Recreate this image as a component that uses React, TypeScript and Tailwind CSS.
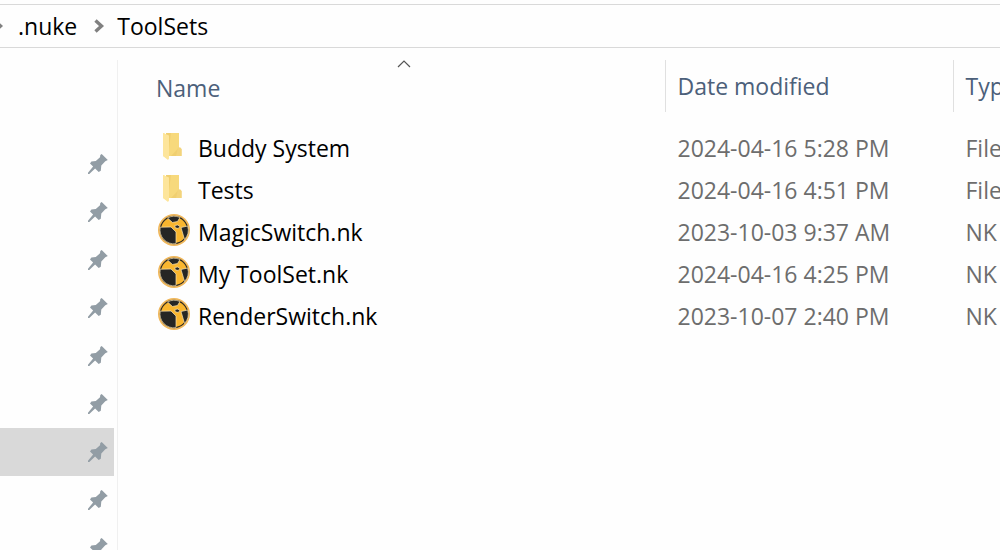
type Entry = {
  name: string;
  kind: "folder" | "nuke";
  modified: string;
  type: string;
};

const entries: Entry[] = [
  { name: "Buddy System", kind: "folder", modified: "2024-04-16 5:28 PM", type: "File folder" },
  { name: "Tests", kind: "folder", modified: "2024-04-16 4:51 PM", type: "File folder" },
  { name: "MagicSwitch.nk", kind: "nuke", modified: "2023-10-03 9:37 AM", type: "NK File" },
  { name: "My ToolSet.nk", kind: "nuke", modified: "2024-04-16 4:25 PM", type: "NK File" },
  { name: "RenderSwitch.nk", kind: "nuke", modified: "2023-10-07 2:40 PM", type: "NK File" },
];

const pinnedCount = 9;
const selectedPin = 6;

const ChevronIcon = () => (
  <svg width="12" height="16" viewBox="0 0 12 16" fill="none" className="shrink-0">
    <path d="M2.5 2.5 8.5 8l-6 5.5" stroke="#808080" strokeWidth="3.4" />
  </svg>
);

const PinIcon = () => (
  <svg width="20" height="20" viewBox="0 0 20 20" fill="#929da5">
    <path d="M13.7 0 19.8 6.1 17.3 7.3 13.3 11.6 12.8 16.7 10.7 18 7.1 14.4 1.3 20H0v-1.3l5.1-6.2L2 9.4l1.4-1.8 4.4-.5L12 3.3l.3-2.2z" />
  </svg>
);

const FolderIcon = () => (
  <svg width="32" height="32" viewBox="0 0 32 32">
    <path d="M8 3h13v14.500l2.500 1.500v7H8z" fill="#f0cf70" />
    <path d="M13 3h8v14.500L13 26H10z" fill="#f7d97c" />
    <path d="M20 17.500h2.500l1 1.500v7H18z" fill="#f3d47c" />
    <path d="M5 3h1l5 4v22.500L5 26z" fill="#ffe9a4" />
    <path d="m5 3 6 2.500V26l-1 4-5-4z" fill="#fde59b" />
  </svg>
);

const NukeIcon = () => (
  <svg width="32" height="32" viewBox="0 0 32 32">
    <circle cx="16" cy="16" r="16" fill="#f0b75a" />
    <circle cx="16" cy="16" r="14.200" fill="#2b2923" />
    <circle cx="16" cy="16" r="13" fill="#f9b62f" />
    <g fill="#262624" stroke="#f7e3b4" strokeWidth="0.700">
      <path d="M9.500 4A14 14 0 0 1 22 3.500l-2.500 4-5 1z" />
      <path d="M2.200 13.200 13 13l5 5v11.700A14 14 0 0 1 2.200 13.200z" />
      <path d="M23 13.500 29.700 12A14 14 0 0 1 26.500 25.500z" />
      <path d="m16.800 11.500 3-.5 2 1.500-1.500 2-3-.7z" />
    </g>
  </svg>
);

const SortIcon = () => (
  <svg width="14" height="8" viewBox="0 0 14 8" fill="none">
    <path d="m1 7 6-6 6 6" stroke="#555" strokeWidth="1.200" />
  </svg>
);

const AddressBar = () => (
  <nav
    aria-label="Path"
    className="mt-1 flex h-11 shrink-0 items-center border-y border-[#d9d9d9] text-black"
  >
    <div className="-ml-2">
      <ChevronIcon />
    </div>
    <a href="#nuke" className="ml-3 pl-[2px]">
      .nuke
    </a>
    <div className="mr-3 ml-4">
      <ChevronIcon />
    </div>
    <a href="#toolsets">ToolSets</a>
  </nav>
);

const Sidebar = () => (
  <aside className="mt-3 w-[118px] shrink-0 overflow-hidden border-r border-[#f0f0f0] pt-20 pr-[3px]">
    <ul>
      {Array.from({ length: pinnedCount }, (_, i) => (
        <li
          key={i}
          className={
            i === selectedPin
              ? "flex h-12 items-center justify-end bg-[#d9d9d9] pr-[6px]"
              : "flex h-12 items-center justify-end pr-[6px]"
          }
        >
          <PinIcon />
        </li>
      ))}
    </ul>
  </aside>
);

const FileTable = () => (
  <table className="mt-3 w-full min-w-[1000px] table-fixed self-start text-left">
    <thead>
      <tr className="h-[52px] text-[#4c607a]">
        <th className="w-[521px] p-0 font-normal">
          <div className="flex h-[52px] flex-col">
            <div className="flex h-3 items-center justify-center pb-1">
              <SortIcon />
            </div>
            <span className="px-3 leading-8">Name</span>
          </div>
        </th>
        <th className="w-[288px] border-l border-[#e0e0e0] px-3 py-0 font-normal">
          Date modified
        </th>
        <th className="border-l border-[#e0e0e0] px-3 py-0 font-normal">Type</th>
      </tr>
    </thead>
    <tbody className="before:block before:h-[15px]">
      {entries.map((entry) => (
        <tr key={entry.name} className="h-[42px] text-[#6d6d6d]">
          <td className="py-0 pr-0 pl-[14px]">
            <div className="flex items-center gap-2 text-black">
              <div className="pb-1">
                {entry.kind === "folder" ? <FolderIcon /> : <NukeIcon />}
              </div>
              <span>{entry.name}</span>
            </div>
          </td>
          <td className="border-l border-transparent px-3 py-0">{entry.modified}</td>
          <td className="border-l border-transparent px-3 py-0">{entry.type}</td>
        </tr>
      ))}
    </tbody>
  </table>
);

const App = () => {
  return (
    <div className="flex h-screen flex-col overflow-hidden bg-[#fefefe] font-['Open_Sans','Noto_Sans',sans-serif] text-[23px] leading-8">
      <AddressBar />
      {/* sidebar and file list */}
      <div className="flex min-h-0 flex-1">
        <Sidebar />
        <main className="flex min-w-0 flex-1 overflow-hidden pl-[26px]">
          <FileTable />
        </main>
      </div>
    </div>
  );
};

export default App;
